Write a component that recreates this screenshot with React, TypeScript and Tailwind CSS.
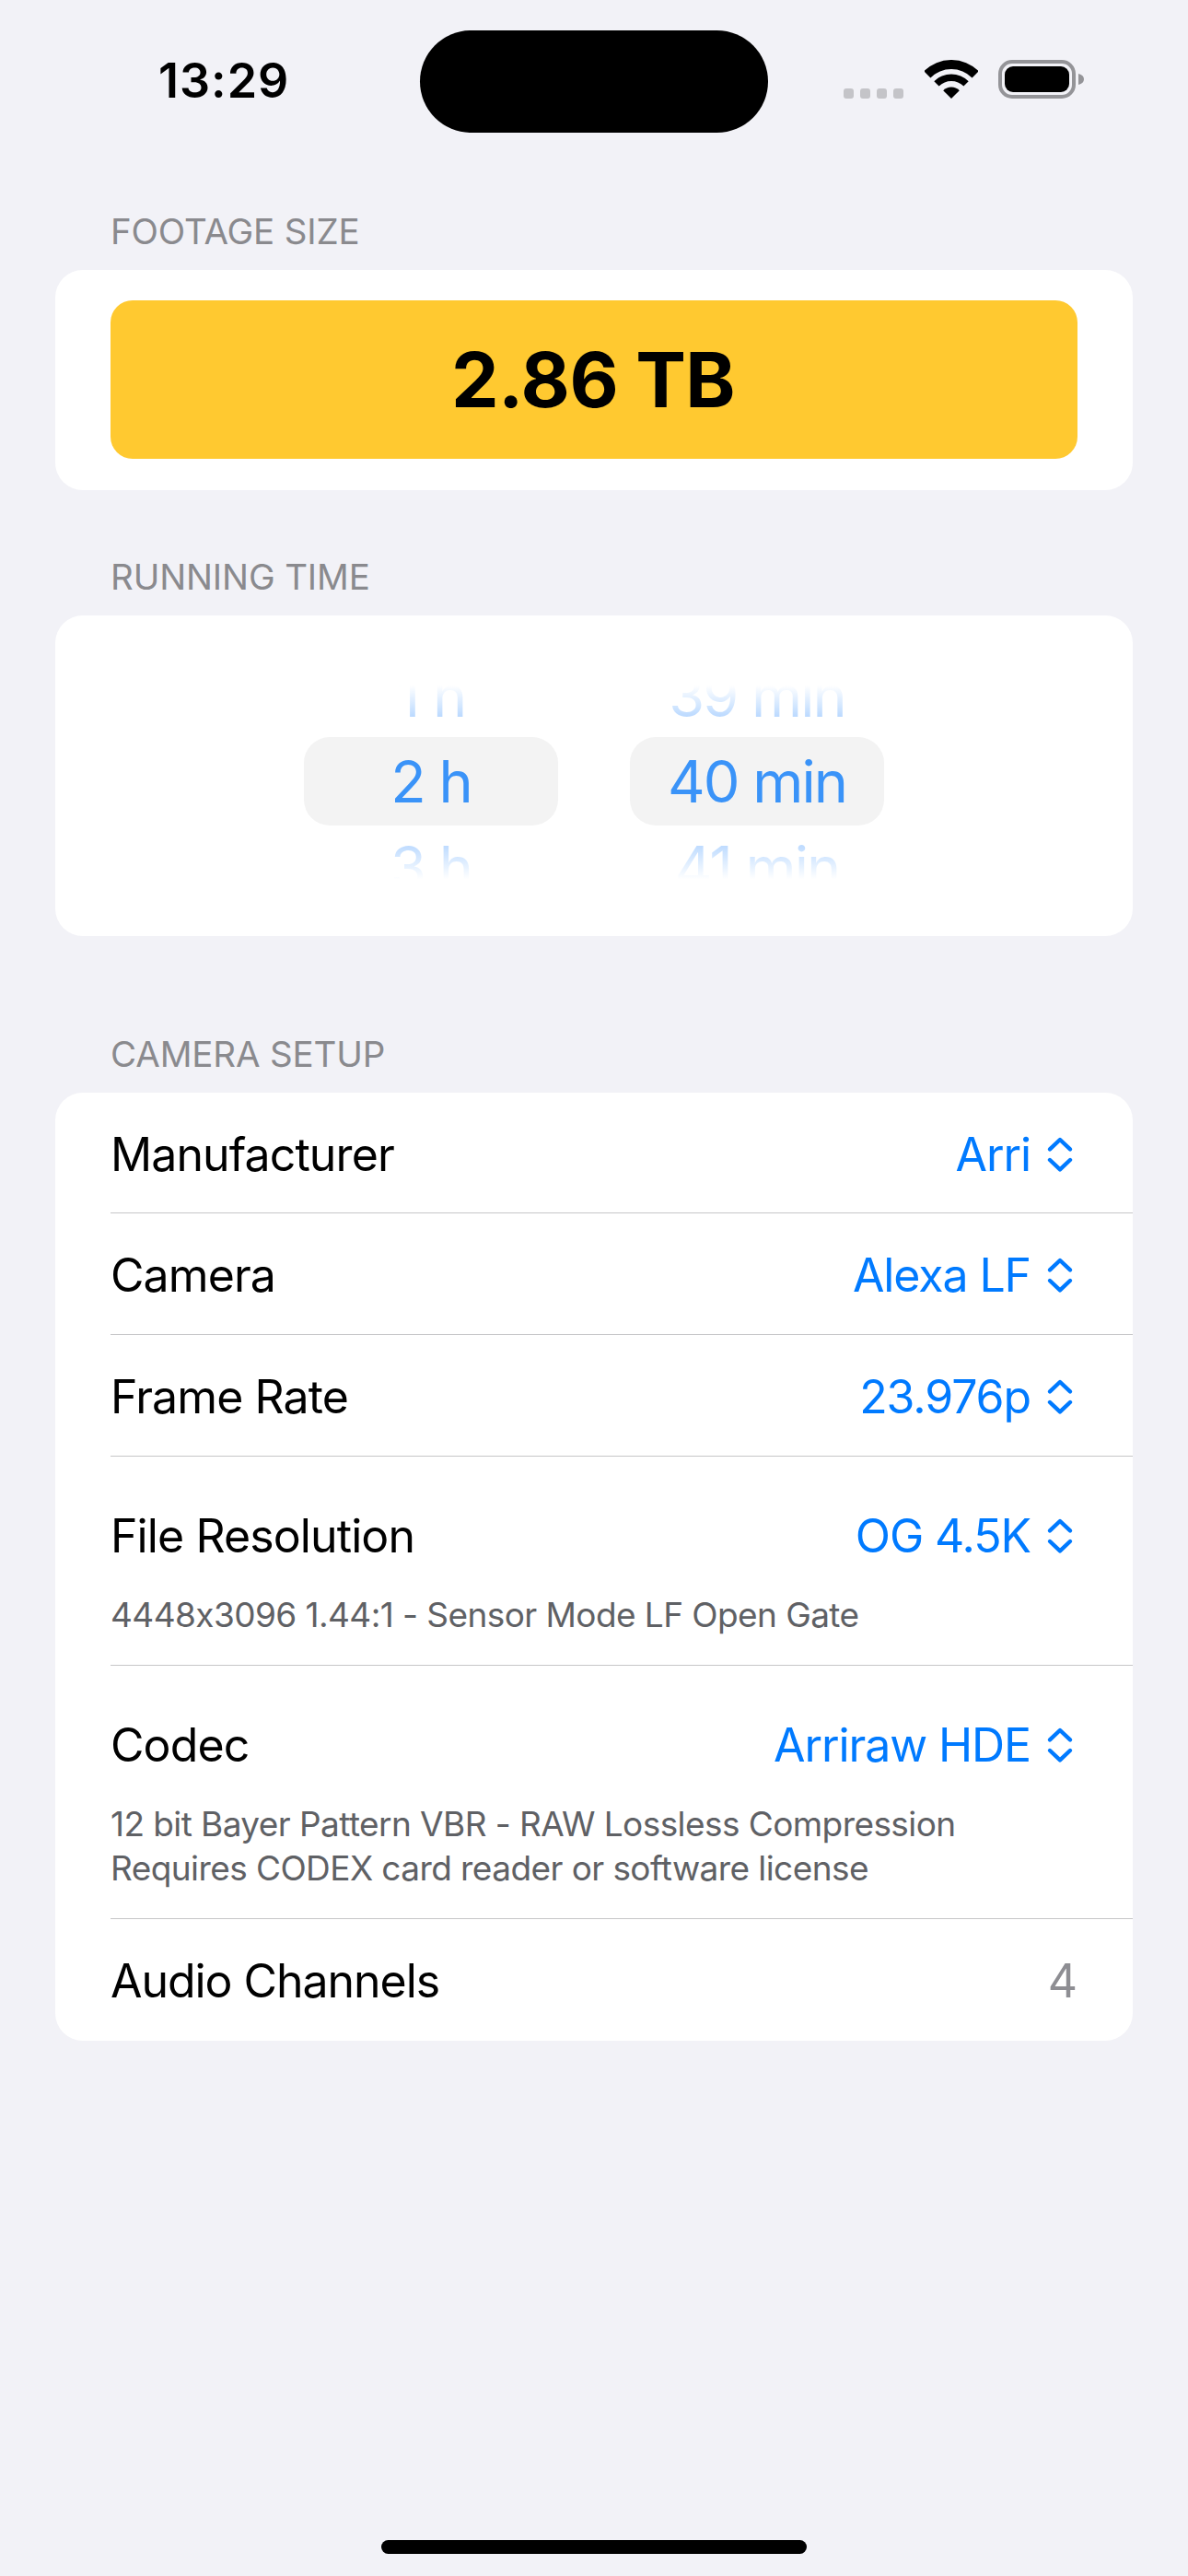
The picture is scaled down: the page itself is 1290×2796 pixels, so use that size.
const BLUE = "text-[#007aff]";

function Chevrons() {
  return (
    <svg width="30" height="42" viewBox="0 0 30 42" fill="none" stroke="#007aff" strokeWidth="4.4" strokeLinecap="round" strokeLinejoin="round" className="ml-[17px] mr-[4px] shrink-0">
      <path d="M4 15.4 L15 5 L26 15.4" />
      <path d="M4 27 L15 37.4 L26 27" />
    </svg>
  );
}

function Header({ children, className }: { children: string; className: string }) {
  return (
    <div className={`pl-[120px] text-[38.5px] leading-[44px] tracking-[-0.15px] text-[#8a8a8e] ${className}`}>{children}</div>
  );
}

function Row({ label, value, note, height }: { label: string; value: string; note?: string[]; height: string }) {
  return (
    <div className={`ml-[60px] border-b border-[#c6c6c8] pr-[60px] ${height}`}>
      <div className="flex h-[128px] items-center justify-between">
        <span className="text-[50px] tracking-[-0.9px] text-black">{label}</span>
        <span className="flex items-center">
          <span className={`text-[50px] tracking-[-1.1px] ${BLUE}`}>{value}</span>
          <Chevrons />
        </span>
      </div>
      {note && (
        <div className="-mt-[2px] text-[37px] leading-[48px] tracking-[-0.58px] text-[#5f6165]">
          {note.map((n) => (
            <div key={n}>{n}</div>
          ))}
        </div>
      )}
    </div>
  );
}

function Wheel({ items }: { items: [string, string, string] }) {
  return (
    <div className="flex w-[276px] flex-col items-center">
      <div className="flex h-[40px] items-end justify-center overflow-hidden">
        <span className="relative top-[8px] bg-gradient-to-b from-[#ffffff] from-35% to-[#bcdaff] to-80% bg-clip-text text-[63px] leading-[74px] tracking-[-2px] text-transparent">{items[0]}</span>
      </div>
      <div className="mt-[16px] flex h-[96px] w-full items-center justify-center rounded-[28px] bg-[#f3f3f3] text-[63px] tracking-[-2px] text-[#3a93f8]">
        {items[1]}
      </div>
      <div className="mt-[18px] flex h-[41px] items-start justify-center overflow-hidden">
        <span className="relative -top-[10px] bg-gradient-to-b from-[#bcdaff] from-17% to-[#ffffff] to-68% bg-clip-text text-[63px] leading-[74px] tracking-[-2px] text-transparent">{items[2]}</span>
      </div>
    </div>
  );
}

export default function App() {
  return (
    <div className="relative flex h-[2796px] w-[1290px] flex-col overflow-hidden bg-[#f2f2f7] font-['Inter','Liberation_Sans',sans-serif]">
      <div className="flex h-[144px] items-start pt-[33px]">
        <div className="w-[456px] pl-[172px] pt-[24px] text-[52px] font-semibold leading-[62px] tracking-[1px] text-black">13:29</div>
        <div className="h-[111px] w-[378px] rounded-full bg-black" />
        <div className="ml-[82px] flex items-end pt-[32px]">
          <div className="flex gap-[7px]">
            {[0, 1, 2, 3].map((i) => (
              <div key={i} className="h-[11px] w-[11px] rounded-[3px] bg-[#c4c4c8]" />
            ))}
          </div>
          <svg width="58" height="42" viewBox="0 0 58 42" fill="#000" className="ml-[23px]">
            <path d="M-0.7 12.3 A42 42 0 0 1 58.7 12.3 L51.6 19.4 A32 32 0 0 0 6.4 19.4 Z" />
            <path d="M10.3 23.3 A26.5 26.5 0 0 1 47.7 23.3 L42.4 28.6 A19 19 0 0 0 15.6 28.6 Z" />
            <path d="M20.2 33.2 A12.5 12.5 0 0 1 37.8 33.2 L29 42 Z" />
          </svg>
          <svg width="94" height="42" viewBox="0 0 94 42" className="ml-[22px]">
            <rect x="2" y="2" width="80" height="38" rx="13" fill="none" stroke="#949498" strokeWidth="4" />
            <rect x="7" y="7" width="70" height="28" rx="9" fill="#000" />
            <path d="M87 15 C91 16 93 18 93 21 C93 24 91 26 87 27 Z" fill="#949498" />
          </svg>
        </div>
      </div>

      <Header className="mt-[85px]">FOOTAGE SIZE</Header>
      <div className="mx-[60px] mt-[20px] h-[239px] rounded-[30px] bg-white px-[60px] py-[33px]">
        <div className="flex h-[172px] items-center justify-center rounded-[24px] bg-[#ffc930] pr-[2px] text-[82px] font-bold tracking-[-0.5px] text-black">2.86 TB</div>
      </div>

      <Header className="mt-[72px]">RUNNING TIME</Header>
      <div className="mx-[60px] mt-[20px] flex h-[348px] justify-center gap-[78px] rounded-[30px] bg-white pt-[76px]">
        <Wheel items={["1 h", "2 h", "3 h"]} />
        <Wheel items={["39 min", "40 min", "41 min"]} />
      </div>

      <Header className="mt-[106px]">CAMERA SETUP</Header>
      <div className="mx-[60px] mt-[20px] flex h-[1029px] flex-col rounded-[30px] bg-white">
        <Row label="Manufacturer" value="Arri" height="h-[131px] pt-[3px]" />
        <Row label="Camera" value="Alexa LF" height="h-[132px] pt-[3px]" />
        <Row label="Frame Rate" value="23.976p" height="h-[132px] pt-[3px]" />
        <Row label="File Resolution" value="OG 4.5K" height="h-[227px] pt-[22px]" note={["4448x3096 1.44:1 - Sensor Mode LF Open Gate"]} />
        <Row label="Codec" value="Arriraw HDE" height="h-[275px] pt-[22px]" note={["12 bit Bayer Pattern VBR - RAW Lossless Compression", "Requires CODEX card reader or software license"]} />
        <div className="ml-[60px] flex h-[132px] items-center justify-between pr-[60px] pt-[2px]">
          <span className="text-[50px] tracking-[-1.05px] text-black">Audio Channels</span>
          <span className="text-[50px] text-[#8e8e93]">4</span>
        </div>
      </div>

      <div className="absolute bottom-[24px] left-[414px] h-[15px] w-[462px] rounded-full bg-black" />
    </div>
  );
}
